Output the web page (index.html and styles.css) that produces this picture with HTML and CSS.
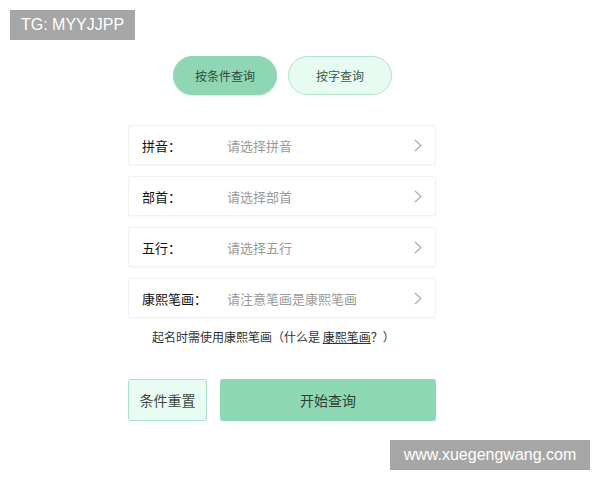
FILE: index.html
```html
<!DOCTYPE html>
<html lang="zh">
<head>
<meta charset="utf-8">
<link rel="stylesheet" href="styles.css">
</head>
<body>
<div class="mark mark-tl">TG: MYYJJPP</div>
<main class="page">
  <div class="tabs">
    <div class="tab tab-active">按条件查询</div>
    <div class="tab">按字查询</div>
  </div>
  <div class="rows">
    <div class="row"><span class="label">拼音：</span><span class="ph">请选择拼音</span><svg class="chev" width="8" height="13" viewBox="0 0 8 13"><path d="M1 1l6 5.5L1 12" fill="none" stroke="#a8a8a8" stroke-width="1.1"/></svg></div>
    <div class="row"><span class="label">部首：</span><span class="ph">请选择部首</span><svg class="chev" width="8" height="13" viewBox="0 0 8 13"><path d="M1 1l6 5.5L1 12" fill="none" stroke="#a8a8a8" stroke-width="1.1"/></svg></div>
    <div class="row"><span class="label">五行：</span><span class="ph">请选择五行</span><svg class="chev" width="8" height="13" viewBox="0 0 8 13"><path d="M1 1l6 5.5L1 12" fill="none" stroke="#a8a8a8" stroke-width="1.1"/></svg></div>
    <div class="row"><span class="label">康熙笔画：</span><span class="ph">请注意笔画是康熙笔画</span><svg class="chev" width="8" height="13" viewBox="0 0 8 13"><path d="M1 1l6 5.5L1 12" fill="none" stroke="#a8a8a8" stroke-width="1.1"/></svg></div>
  </div>
  <p class="note">起名时需使用康熙笔画（什么是 <span class="link">康熙笔画</span>？）</p>
  <div class="actions">
    <div class="btn btn-reset">条件重置</div>
    <div class="btn btn-start">开始查询</div>
  </div>
</main>
<div class="mark mark-br">www.xuegengwang.com</div>
</body>
</html>
```
FILE: styles.css
```css
* { box-sizing: border-box; }
html, body { margin: 0; padding: 0; background: #fff; }
body {
  width: 600px; height: 480px; position: relative; overflow: hidden;
  font-family: "Noto Sans CJK SC", "Noto Sans", sans-serif;
  color: #222;
}
.mark {
  position: absolute; background: #a6a6a6; color: #fff;
  font-family: "Liberation Sans", Arial, sans-serif; font-size: 16px;
  display: flex; align-items: center; justify-content: center;
}
.mark-tl { left: 10px; top: 10px; width: 125px; height: 30px; }
.mark-br { left: 390px; top: 440px; width: 200px; height: 30px; }

.page { width: 308px; margin-left: 128px; padding-top: 56px; display: flex; flex-direction: column; }
.tabs { display: flex; gap: 11px; padding-left: 45px; }
.tab {
  width: 104px; height: 39px; border-radius: 20px;
  display: flex; align-items: center; justify-content: center;
  font-size: 12px; color: #3d5a4a;
  background: #e6fbf2; border: 1px solid #b3e2cb;
}
.tab-active { background: #8fd7b4; border-color: #8fd7b4; color: #2f4a3b; box-shadow: 0 1px 2px rgba(80,160,120,0.25); }

.rows { display: flex; flex-direction: column; gap: 11px; margin-top: 30px; }
.row {
  height: 40px; display: flex; align-items: center;
  padding: 0 13px 0 13px; background: #fff;
  border: 1px solid #f1f1f1; border-radius: 2px;
  box-shadow: 0 1px 2px rgba(0,0,0,0.03);
  font-size: 13px;
}
.label { width: 85px; color: #111; font-weight: 400; }
.ph { flex: 1; color: #9a9a9a; }
.chev { flex: none; }

.note { margin: 9px 0 0 24px; font-size: 12px; line-height: 20px; color: #333; }
.link { text-decoration: underline; }

.actions { display: flex; gap: 13px; margin-top: 32px; }
.btn { height: 42px; border-radius: 3px; display: flex; align-items: center; justify-content: center; font-size: 14px; }
.btn-reset { width: 79px; background: #e8fcf4; border: 1px solid #acdfc7; color: #3f4a45; }
.btn-start { flex: 1; background: #8fd8b5; color: #2d4235; }
```
